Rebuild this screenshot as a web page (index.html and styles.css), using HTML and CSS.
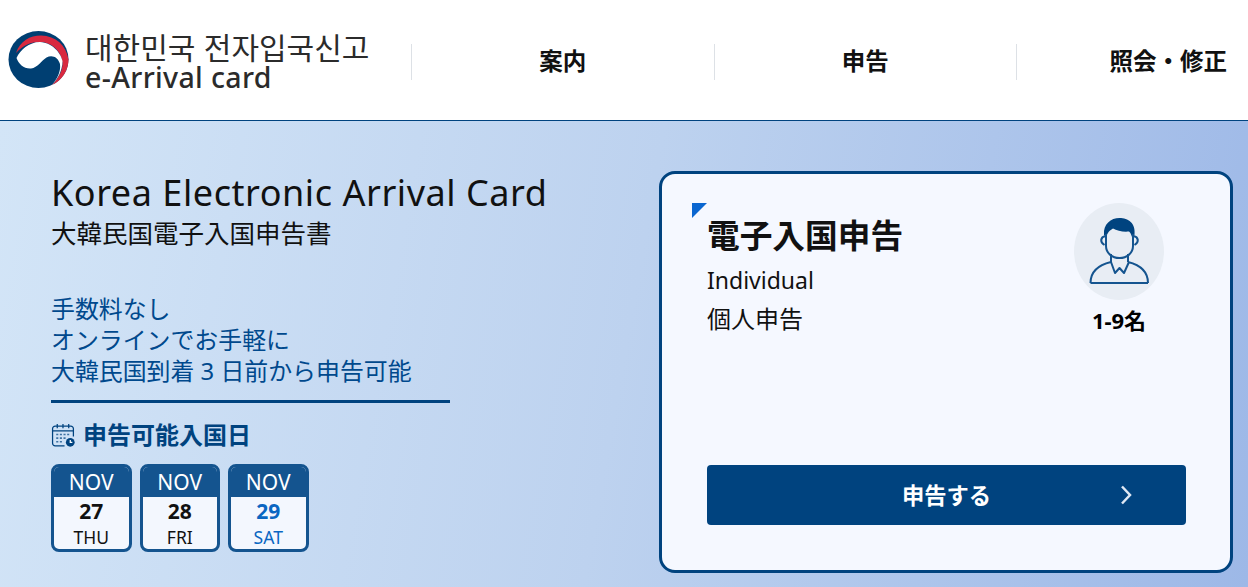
FILE: index.html
```html
<!DOCTYPE html>
<html lang="ja">
<head>
    <meta charset="UTF-8">
    <meta name="viewport" content="width=device-width, initial-scale=1.0">
    <title>e-Arrival card</title>
    <link rel="stylesheet" href="styles.css">
</head>
<body>
    <header>
        <div class="logo">
            <svg class="logo-mark" viewBox="0 0 62 58" width="62" height="58" aria-hidden="true">
                <ellipse cx="30.500" cy="28.500" rx="30" ry="28.500" fill="#003f72"/>
                <path fill="#d8293f" d="M8 22C12 10 22 4.500 33 4.500 48 5 58 14 60.500 28.500A30 28.500 0 0 1 44 54C52 46 56 36 54 29 52 19 43 11 32 11 23 11 15 14 8 22z"/>
                <path fill="#fff" d="M8.500 27C12 19 21 11 32 11 44 11.500 53 22 54.500 30 54.500 40 49 49 44 54 49 48 53 41 52 33 50 26 44 23.500 38.500 26.500 33 30 30 36.500 23 37.500 16 38 10.500 33 8.500 27z"/>
            </svg>
            <div class="logo-text">
                <span class="logo-ko" lang="ko">대한민국 전자입국신고</span>
                <span class="logo-en">e-Arrival card</span>
            </div>
        </div>
        <nav>
            <ul>
                <li><a href="#">案内</a></li>
                <li><a href="#">申告</a></li>
                <li><a href="#">照会・修正</a></li>
            </ul>
        </nav>
    </header>
    <main>
        <section class="intro">
            <h1>Korea Electronic Arrival Card</h1>
            <p class="subtitle">大韓民国電子入国申告書</p>
            <ul class="points">
                <li>手数料なし</li>
                <li>オンラインでお手軽に</li>
                <li>大韓民国到着 3 日前から申告可能</li>
            </ul>
            <h2 class="dates-title">
                <svg viewBox="0 0 24 24" width="25" height="25" fill="none" stroke="#00437f" stroke-width="1.200" aria-hidden="true">
                    <path d="M13 22H4a2.500 2.500 0 0 1-2.500-2.500V5.500A2.500 2.500 0 0 1 4 3h15a2.500 2.500 0 0 1 2.500 2.500V13"/>
                    <path d="M6 1v4M11.500 1v4M17 1v4M1.500 7.500h20"/>
                    <path stroke-width="1.600" stroke-dasharray="2 1.500" stroke-opacity="0.700" d="M5 11h13M5 14.500h9M5 18h7"/>
                    <circle cx="18.500" cy="18.500" r="4.200" fill="#00437f" stroke="none"/>
                    <path stroke="#fff" d="M18.500 16.200v2.500h2"/>
                </svg>
                申告可能入国日
            </h2>
            <div class="dates">
                <div class="date">
                    <div class="month">NOV</div>
                    <div class="day">27</div>
                    <div class="weekday">THU</div>
                </div>
                <div class="date">
                    <div class="month">NOV</div>
                    <div class="day">28</div>
                    <div class="weekday">FRI</div>
                </div>
                <div class="date sat">
                    <div class="month">NOV</div>
                    <div class="day">29</div>
                    <div class="weekday">SAT</div>
                </div>
            </div>
        </section>
        <section class="card">
            <span class="corner"></span>
            <div class="card-top">
                <div class="card-text">
                    <h2>電子入国申告</h2>
                    <p class="card-en">Individual</p>
                    <p class="card-ja">個人申告</p>
                </div>
                <div class="people">
                    <div class="avatar">
                        <svg viewBox="0 0 60 66" width="60" height="66" fill="none" stroke="#14548f" stroke-width="2" aria-hidden="true">
                            <path fill="#00437f" stroke="none" d="M15 17C14 6 22 0 30.500 0 39 0 47 5 45.500 17L43 19C42 16 41 14 40 13.500 34 14 28 13 24 10.500 21 12 18 15 17.500 19z"/>
                            <path d="M17 16v12c0 7 6 12 13.500 12S44 35 44 28V16"/>
                            <path d="M16.500 18c-5 1-6 6-1 9M44.500 18c5 1 6 6 1 9"/>
                            <path d="M22 36v8M39 36v8"/>
                            <path stroke-linejoin="round" d="M22 44l4 11 4.500-5 4.500 5 5-11"/>
                            <path stroke-linejoin="round" d="M1.500 65c0-11 8-18 20.500-21M59 65c0-11-8-18-20-21M1.500 65H59"/>
                        </svg>
                    </div>
                    <div class="count">1-9名</div>
                </div>
            </div>
            <a class="apply" href="#">
                <span>申告する</span>
                <svg class="arrow" viewBox="0 0 14 20" width="14" height="20" fill="none" stroke="#dfe8f4" stroke-width="2.500" aria-hidden="true">
                    <path d="M2 1.500l8 8.500-8 8.500"/>
                </svg>
            </a>
        </section>
    </main>
</body>
</html>
```

FILE: styles.css
```css
html, body {
    margin: 0;
    padding: 0;
    height: 587px;
    overflow: hidden;
}

body {
    font-family: "Noto Sans", "Noto Sans CJK JP", sans-serif;
    color: #111;
    background-color: #fff;
}

header {
    display: flex;
    align-items: center;
    height: 120px;
    border-bottom: 1px solid #00437f;
}

.logo {
    display: flex;
    align-items: center;
    gap: 15px;
    width: 411px;
    flex-shrink: 0;
    padding-left: 8px;
    box-sizing: border-box;
}

.logo-mark {
    flex-shrink: 0;
}

.logo-text {
    display: flex;
    flex-direction: column;
    color: #2b2b2b;
}

.logo-ko {
    font-family: "Noto Sans CJK KR", sans-serif;
    font-size: 30px;
    line-height: 34px;
    white-space: nowrap;
}

.logo-en {
    font-family: "Noto Sans", sans-serif;
    font-size: 28.5px;
    line-height: 28px;
    font-weight: 500;
    letter-spacing: 0.35px;
    white-space: nowrap;
}

nav {
    margin-top: 4px;
}

nav ul {
    list-style: none;
    margin: 0;
    padding: 0;
    display: flex;
}

nav ul li {
    width: 302.5px;
    box-sizing: border-box;
    flex-shrink: 0;
    height: 36px;
    border-left: 1px solid #dde1e6;
    display: flex;
    align-items: center;
    justify-content: center;
}

nav ul li:last-child {
    width: 232px;
    justify-content: flex-end;
    padding-right: 21px;
}

nav ul li a {
    margin-bottom: 4px;
    text-decoration: none;
    color: #111;
    font-size: 23.5px;
    font-weight: 700;
    white-space: nowrap;
}

main {
    display: flex;
    justify-content: space-between;
    height: 466px;
    box-sizing: border-box;
    padding: 50px 15px 0 51px;
    background: linear-gradient(100deg, #d3e5f7 0%, #bdd2ef 50%, #9db8e7 100%);
}

.intro {
    width: 399px;
    flex-shrink: 0;
}

h1 {
    margin: 0;
    font-size: 36px;
    line-height: 44px;
    font-weight: 400;
    letter-spacing: 0.55px;
    white-space: nowrap;
}

.subtitle {
    margin: 0;
    font-size: 25.5px;
    line-height: 36px;
}

.points {
    list-style: none;
    margin: 0;
    padding: 42px 0 14px;
    border-bottom: 3px solid #00437f;
    color: #00498d;
    font-size: 23.9px;
    line-height: 31px;
    white-space: nowrap;
}

.dates-title {
    display: flex;
    align-items: center;
    gap: 7px;
    margin: 12px 0 9px;
    color: #00437f;
    font-size: 24px;
    line-height: 40px;
    font-weight: 700;
}

.dates {
    display: flex;
    gap: 8px;
}

.date {
    width: 80.5px;
    height: 88px;
    box-sizing: border-box;
    border: 3px solid #14548f;
    border-radius: 8px;
    background-color: #f3f7fe;
    text-align: center;
    overflow: hidden;
}

.month {
    background-color: #14548f;
    color: #fff;
    font-size: 21px;
    line-height: 30px;
}

.day {
    font-size: 21px;
    line-height: 29px;
    font-weight: 700;
}

.weekday {
    font-size: 17.5px;
    line-height: 22px;
}

.sat .day, .sat .weekday {
    color: #0a66c2;
}

.card {
    position: relative;
    width: 574px;
    height: 402px;
    box-sizing: border-box;
    border: 3px solid #00437f;
    border-radius: 16px;
    background-color: #f5f8ff;
    padding: 40px 44px 45px 45px;
    display: flex;
    flex-direction: column;
    justify-content: space-between;
}

.corner {
    position: absolute;
    left: 30px;
    top: 29px;
    border-top: 15px solid #0a66d0;
    border-right: 15px solid transparent;
}

.card-top {
    display: flex;
    justify-content: space-between;
}

.card-text h2 {
    margin: 0;
    font-size: 32.7px;
    line-height: 44px;
    font-weight: 700;
}

.card-en {
    margin: 4px 0 0;
    font-size: 23px;
    line-height: 36px;
}

.card-ja {
    margin: 2px 0 0;
    font-size: 24px;
    line-height: 38px;
}

.people {
    display: flex;
    flex-direction: column;
    align-items: center;
    width: 90px;
    margin: -11px 22px 0 0;
}

.avatar {
    width: 90px;
    height: 97px;
    border-radius: 50%;
    background-color: #e8edf4;
    display: flex;
    align-items: flex-end;
    justify-content: center;
    padding-bottom: 16px;
    box-sizing: border-box;
}

.count {
    margin-top: 5px;
    font-size: 22px;
    line-height: 30px;
    font-weight: 700;
    color: #000;
}

.apply {
    position: relative;
    display: flex;
    align-items: center;
    justify-content: center;
    height: 60px;
    padding-bottom: 2px;
    box-sizing: border-box;
    border-radius: 4px;
    background-color: #00437f;
    color: #fff;
    font-size: 22.3px;
    font-weight: 700;
    text-decoration: none;
}

.arrow {
    position: absolute;
    right: 52px;
    top: 20px;
}
```
